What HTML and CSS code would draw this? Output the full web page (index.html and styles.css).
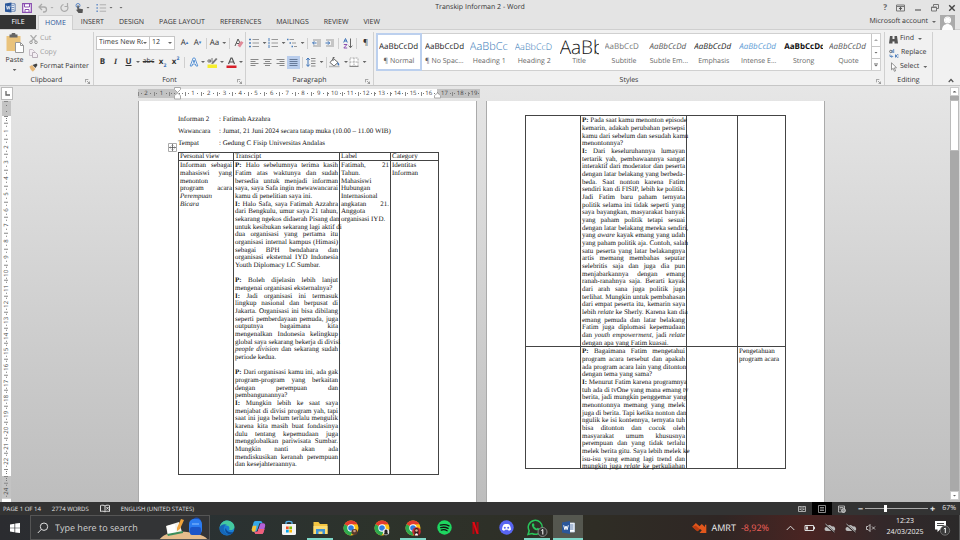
FILE: index.html
```html
<!DOCTYPE html>
<html lang="id">
<head>
<meta charset="utf-8">
<title>Transkip Informan 2 - Word</title>
<link rel="stylesheet" href="styles.css">
</head>
<body>
<svg width="0" height="0" class="defs" aria-hidden="true">
  <symbol id="chrome" viewBox="0 0 16 16">
    <circle cx="8" cy="8" r="7.5" fill="#fbc116"/>
    <path d="M8 8 1.5 4.2A7.500 7.500 0 0 1 14.500 4.200L8 4.500Z" fill="#e33b2e"/>
    <path d="M1.500 4.200A7.500 7.500 0 0 0 7.500 15.500L11 9.800 8 8Z" fill="#2da94f"/>
    <circle cx="8" cy="8" r="3.700" fill="#fff"/><circle cx="8" cy="8" r="2.800" fill="#2f7de1"/>
  </symbol>
  <symbol id="cloud-off" viewBox="0 0 12 12"><path d="M2.500 9a2 2 0 0 1 0-4A3 3 0 0 1 8 4.500 2.300 2.300 0 0 1 9.500 9Z" fill="#bbb"/><path d="M1.500 2.500l9 8" stroke="#2e2424" stroke-width="2"/><path d="M1.500 2l9 8" stroke="#ddd" stroke-width=".8"/></symbol>
  <symbol id="launch" viewBox="0 0 6 6"><path d="M.5 4V.5H4M2.500 2.500l3 3M5.500 3v2.500H3" stroke="#777" stroke-width=".8" fill="none"/></symbol>
</svg>

<div class="app">
  <header class="titlebar">
    <div class="quick">
      <svg width="11" height="11" viewBox="0 0 12 12"><path d="M6 2h5v8H6z" fill="#fff" stroke="#2b579a" stroke-width=".8"/><path d="M7 4h3M7 6h3M7 8h3" stroke="#2b579a" stroke-width=".7"/><path d="M0 1.500 7 .5v11L0 10.500Z" fill="#2b579a"/><path d="M1.500 4l1 4 1-3.500 1 3.500 1-4" stroke="#fff" stroke-width=".8" fill="none"/></svg>
      <button class="plain" aria-label="Save"><svg width="10" height="10" viewBox="0 0 10 10"><path d="M.7.700h8.600v8.600H.7z" fill="#fff" stroke="#8a4fb0" stroke-width="1.300"/><path d="M2.500 1v3h5V1M3 9V6.500h4V9" stroke="#8a4fb0" fill="none"/></svg></button>
      <button class="plain undo" aria-label="Undo"><svg width="10" height="10" viewBox="0 0 10 10"><path d="M4 1 1 4l3 3M1.500 4H6a2.500 2.500 0 0 1 0 5H5" stroke="#aaa" stroke-width="1.300" fill="none"/></svg><i class="caret pale"></i></button>
      <button class="plain" aria-label="Redo"><svg width="9" height="10" viewBox="0 0 9 10"><path d="M3.500 1.500A3.500 3.500 0 1 0 7 2.500M7.500 0v3.500H4.500" stroke="#aaa" stroke-width="1.200" fill="none"/></svg></button>
      <button class="plain" aria-label="Touch mode"><svg width="9" height="10" viewBox="0 0 9 10"><circle cx="3" cy="2.500" r="2" fill="none" stroke="#5b87c5"/><path d="M2.300 2.500h1.500v3L8 6.300 7.500 10H3.500L.8 6.500l1.500.5Z" fill="#555"/></svg><i class="caret"></i></button>
      <button class="plain" aria-label="Numbering"><svg width="11" height="10" viewBox="0 0 12 10"><path d="M4 1.500h7M4 5h7M4 8.500h7" stroke="#aaa"/><path d="M.5 1.500h1.500M.5 5h1.500M.5 8.500h1.500" stroke="#5b87c5" stroke-width="1.500"/></svg><i class="caret"></i></button>
      <i class="caret"></i>
    </div>
    <h1>Transkip Informan 2 - Word</h1>
    <div class="window-buttons">
      <button class="plain" aria-label="Help">?</button>
      <button class="plain" aria-label="Ribbon display"><svg width="9" height="8" viewBox="0 0 9 8"><path d="M.5 1h8v6h-8zM.5 2.500h8" stroke="#777" fill="none"/><path d="M4.500 3.300v3M3 5l1.500-1.700L6 5" stroke="#555" fill="none"/></svg></button>
      <button class="plain" aria-label="Minimize"><svg width="8" height="8" viewBox="0 0 8 8"><path d="M1 6h6" stroke="#666" stroke-width="1.300"/></svg></button>
      <button class="plain" aria-label="Restore"><svg width="8" height="8" viewBox="0 0 8 8"><path d="M2.500 2.500v-2h5v4H6M.5 3h5v4h-5zM.5 3.500h5" stroke="#777" fill="none"/></svg></button>
      <button class="plain" aria-label="Close"><svg width="8" height="8" viewBox="0 0 8 8"><path d="M1.200 1.200l5.500 5.500M6.700 1.200 1.200 6.700" stroke="#444" stroke-width="1.400"/></svg></button>
    </div>
  </header>

  <nav class="tabs">
    <button class="tab file">FILE</button>
    <button class="tab active">HOME</button>
    <button class="tab">INSERT</button>
    <button class="tab">DESIGN</button>
    <button class="tab">PAGE LAYOUT</button>
    <button class="tab">REFERENCES</button>
    <button class="tab">MAILINGS</button>
    <button class="tab">REVIEW</button>
    <button class="tab">VIEW</button>
    <button class="account">Microsoft account <i class="caret"></i>
      <svg width="15" height="15" viewBox="0 0 15 15"><path d="M0 0h15v15H0z" fill="#ababab"/><circle cx="7.500" cy="5" r="3" fill="none" stroke="#fff" stroke-width="1.200"/><circle cx="7.500" cy="5" r="2.500" fill="#fff"/><path d="M2 15c0-8 11-8 11 0Z" fill="#fff"/></svg>
    </button>
  </nav>

  <section class="ribbon">
    <div class="group clipboard">
      <div class="body">
        <button class="paste"><svg width="18" height="20" viewBox="0 0 18 20"><path d="M.5 3h14v15H.5z" fill="#eac37c"/><path d="M3.500 1.500h2a2 2 0 0 1 4 0h2V4.500h-8z" fill="#666"/><path d="M9.500 9.500h5l3 3v7h-8z" fill="#fff" stroke="#999"/><path d="M14.500 9.500v3h3" fill="none" stroke="#999"/></svg>Paste<i class="caret"></i></button>
        <div class="stack">
          <button class="row dim"><svg width="9" height="9" viewBox="0 0 9 9"><path d="M1.500 0l5 6M7.500 0l-5 6" stroke="#aaa" stroke-width="1.200"/><circle cx="2" cy="7.300" r="1.300" fill="none" stroke="#999"/><circle cx="7" cy="7.300" r="1.300" fill="none" stroke="#999"/></svg>Cut</button>
          <button class="row dim"><svg width="9" height="9" viewBox="0 0 9 9"><path d="M.5.500h3l2 2v4h-5z" fill="#f3eef3" stroke="#c9bfc9"/><path d="M3.500 3.500h3l2 2v3h-5z" fill="#f3eef3" stroke="#b9afb9"/></svg>Copy</button>
          <button class="row"><svg width="9" height="9" viewBox="0 0 9 9"><path d="M.5 3.500 3 2l3.500 4L4 8.500C3 8.500 1 6 .5 3.500Z" fill="#e8b878"/><path d="M3.500 2 7.500.500l1 1.500L6.500 5Z" fill="#444"/></svg>Format Painter</button>
        </div>
      </div>
      <footer>Clipboard<svg width="5" height="5"><use href="#launch"/></svg></footer>
    </div>

    <div class="group font">
      <div class="body rows">
        <div class="tools">
          <span class="pick face"><select aria-label="Font"><option>Times New Roman</option></select><i class="caret"></i></span><span class="pick size"><select aria-label="Font size"><option>12</option></select><i class="caret"></i></span>
          <button class="tool grow" aria-label="Grow font">A<sup>▴</sup></button>
          <button class="tool grow" aria-label="Shrink font">A<sup>▾</sup></button>
          <i class="sep"></i>
          <button class="tool case">Aa<i class="caret"></i></button>
          <i class="sep"></i>
          <button class="tool" aria-label="Clear formatting"><svg width="10" height="10" viewBox="0 0 10 10"><path d="M1 8 4 1l2 4M2.500 5.500h3" stroke="#555" fill="none"/><path d="M3.500 7.500 7 3l2.500 1.500L6 9.500Z" fill="#e08a98"/></svg></button>
        </div>
        <div class="tools">
          <button class="tool"><b>B</b></button>
          <button class="tool serif"><b><i>I</i></b></button>
          <button class="tool"><b><u>U</u></b></button><i class="caret"></i>
          <button class="tool wide"><s>abc</s></button>
          <button class="tool"><b>x<sub>2</sub></b></button>
          <button class="tool"><b>x<sup>2</sup></b></button>
          <i class="sep"></i>
          <button class="tool" aria-label="Text effects"><svg width="10" height="10" viewBox="0 0 10 10"><path d="M1.200 9 4.200 1h1.600l3 8H7L6.400 7H3.600L3 9ZM4.200 5.300h1.600L5 3Z" fill="#fff" stroke="#5b93d3"/></svg></button><i class="caret"></i>
          <button class="tool" aria-label="Highlight"><svg width="11" height="11" viewBox="0 0 11 11"><path d="M.5 7.500h9.500V11H.5z" fill="#f6ee2c"/><path d="M4 6.500 9 1l1.500 1L6 7Z" fill="#777"/><circle cx="2" cy="4" r="1.200" fill="none" stroke="#555" stroke-width=".8"/><path d="M3.300 2.500v3M5 1v4" stroke="#555" stroke-width=".8"/></svg></button><i class="caret"></i>
          <button class="tool" aria-label="Font color"><svg width="11" height="11" viewBox="0 0 11 11"><path d="M.5 8.500h10V11H.5z" fill="#d8202a"/><path d="M2.500 7 5 1h1l2.500 6M3.500 5h4" stroke="#555" stroke-width="1.200" fill="none"/></svg></button><i class="caret"></i>
        </div>
      </div>
      <footer>Font<svg width="5" height="5"><use href="#launch"/></svg></footer>
    </div>

    <div class="group paragraph">
      <div class="body rows">
        <div class="tools">
          <button class="tool list" aria-label="Bullets"><svg width="10" height="10" viewBox="0 0 10 10"><path d="M3.500 1.500H10M3.500 5H10M3.500 8.500H10" stroke="#999"/><path d="M0 1.500h2M0 5h2M0 8.500h2" stroke="#4a7ebb" stroke-width="1.700"/></svg><i class="caret"></i></button>
          <button class="tool list" aria-label="Numbering"><svg width="10" height="10" viewBox="0 0 10 10"><path d="M3.500 1.500H10M3.500 5H10M3.500 8.500H10" stroke="#999"/><path d="M1 0v3M1 3.700v2.600M1 7v3" stroke="#4a7ebb"/></svg><i class="caret"></i></button>
          <button class="tool list" aria-label="Multilevel list"><svg width="10" height="10" viewBox="0 0 10 10"><path d="M2.500 1.500H7M5 5h4M7 8.500h3" stroke="#999"/><path d="M0 1.500h1.500M2.500 5h1.500M4.500 8.500h1.500" stroke="#4a7ebb" stroke-width="1.700"/></svg><i class="caret"></i></button>
          <i class="sep"></i>
          <button class="tool" aria-label="Decrease indent"><svg width="10" height="10" viewBox="0 0 10 10"><path d="M1 2h8M5 4h4M5 6h4M1 8h8" stroke="#999"/><path d="M4.500 5H.7M2.300 3.300.600 5l1.700 1.700" stroke="#3f74b8" fill="none"/></svg></button>
          <button class="tool" aria-label="Increase indent"><svg width="10" height="10" viewBox="0 0 10 10"><path d="M1 2h8M6 4h3M6 6h3M1 8h8" stroke="#999"/><path d="M.5 5h4M3 3.300 4.700 5 3 6.700" stroke="#3f74b8" fill="none"/></svg></button>
          <i class="sep"></i>
          <button class="tool" aria-label="Sort"><svg width="10" height="11" viewBox="0 0 10 11"><path d="M.7 4.500 2.500.500l1.800 4M1.300 3h2.400" stroke="#3f74b8" fill="none"/><path d="M.8 6.500h3.200L.8 10h3.400" stroke="#8a4fb0" fill="none"/><path d="M7.500.500v9M5.700 7.700l1.800 2 1.800-2" stroke="#666" fill="none"/></svg></button>
          <i class="sep"></i>
          <button class="tool">¶</button>
        </div>
        <div class="tools">
          <button class="tool" aria-label="Align left"><svg width="9" height="9" viewBox="0 0 9 9"><path d="M.5 1.500h8M.5 3.500h5M.5 5.500h8M.5 7.500h5" stroke="#888"/></svg></button>
          <button class="tool" aria-label="Center"><svg width="9" height="9" viewBox="0 0 9 9"><path d="M.5 1.500h8M2 3.500h5M.5 5.500h8M2 7.500h5" stroke="#888"/></svg></button>
          <button class="tool" aria-label="Align right"><svg width="9" height="9" viewBox="0 0 9 9"><path d="M.5 1.500h8M3.500 3.500h5M.5 5.500h8M3.500 7.500h5" stroke="#888"/></svg></button>
          <button class="tool pressed" aria-label="Justify"><svg width="9" height="9" viewBox="0 0 9 9"><path d="M.5 1.500h8M.5 3.500h8M.5 5.500h8M.5 7.500h8" stroke="#667a99"/></svg></button>
          <i class="sep"></i>
          <button class="tool list" aria-label="Line spacing"><svg width="10" height="10" viewBox="0 0 10 10"><path d="M5 1.500h4.500M5 4h4.500M5 6.500h4.500M5 9h4.500" stroke="#888"/><path d="M2 1v8M.3 3 2 1l1.700 2M.3 7.500 2 9.500l1.700-2" stroke="#3f74b8" fill="none"/></svg><i class="caret"></i></button>
          <i class="sep"></i>
          <button class="tool list" aria-label="Shading"><svg width="11" height="11" viewBox="0 0 11 11"><path d="M4.500 1.500 9 5.500 5 9 1 5.500Z" fill="#fff" stroke="#666"/><path d="M4 4V.500h1.500" stroke="#666" fill="none"/><path d="M8.500 5c2 1 2 3 1.500 3.500S8 8 8.500 5Z" fill="#3f74b8"/><path d="M0 9.500h10.500" stroke="#bbb" stroke-width="1.500"/></svg><i class="caret"></i></button>
          <button class="tool list" aria-label="Borders"><svg width="10" height="10" viewBox="0 0 10 10"><path d="M1 1h8v8H1zM5 1v8M1 5h8" fill="#fff" stroke="#aaa" stroke-dasharray="1 .5"/><path d="M.5 9.500h9" stroke="#888"/></svg><i class="caret"></i></button>
        </div>
      </div>
      <footer>Paragraph<svg width="5" height="5"><use href="#launch"/></svg></footer>
    </div>

    <div class="group styles">
      <div class="body">
        <div class="gallery">
          <button class="style on"><span>AaBbCcDd</span>¶ Normal</button>
          <button class="style"><span>AaBbCcDd</span>¶ No Spac...</button>
          <button class="style h1"><span>AaBbCc</span>Heading 1</button>
          <button class="style h2"><span>AaBbCcD</span>Heading 2</button>
          <button class="style ttl"><span>AaBb</span>Title</button>
          <button class="style sub"><span>AaBbCcD</span>Subtitle</button>
          <button class="style it soft"><span>AaBbCcDd</span>Subtle Em...</button>
          <button class="style it"><span>AaBbCcDd</span>Emphasis</button>
          <button class="style it blue"><span>AaBbCcDd</span>Intense E...</button>
          <button class="style strong"><span>AaBbCcDd</span>Strong</button>
          <button class="style it soft"><span>AaBbCcDd</span>Quote</button>
          <div class="scroller"><button aria-label="Up"><i class="caret up pale"></i></button><button aria-label="Down"><i class="caret"></i></button><button aria-label="More"><i class="caret more"></i></button></div>
        </div>
      </div>
      <footer>Styles<svg width="5" height="5"><use href="#launch"/></svg></footer>
    </div>

    <div class="group editing">
      <div class="body">
        <div class="stack">
          <button class="row"><svg width="9" height="9" viewBox="0 0 9 9"><path d="M1 1h2.500v3h2V1H8l1 7.500H5.500v-2h-2v2H0Z" fill="#555"/></svg>Find <i class="caret"></i></button>
          <button class="row"><svg width="10" height="9" viewBox="0 0 10 9"><circle cx="1.800" cy="2.500" r="1.200" fill="none" stroke="#555" stroke-width=".8"/><path d="M3.200 1v3M4.700 0v4M1 5.500v2h2.500M2.500 6.300l1.200 1.200-1.200 1.200" fill="none" stroke="#3f74b8" stroke-width=".8"/><path d="M9.500 6a1.300 1.300 0 1 0 0 2M6.500 5.500v3" fill="none" stroke="#3f74b8" stroke-width=".9"/></svg>Replace</button>
          <button class="row"><svg width="9" height="10" viewBox="0 0 9 10"><path d="M2.500.8v7l1.700-1.500 1.200 3 1.200-.5-1.200-2.900 2.100-.2Z" fill="#fff" stroke="#777" stroke-width=".8"/></svg>Select <i class="caret"></i></button>
        </div>
      </div>
      <footer>Editing</footer>
    </div>
    <button class="collapse" aria-label="Collapse the ribbon"><svg width="6" height="5" viewBox="0 0 6 5"><path d="M.7 4 3 1.500 5.300 4" stroke="#555" stroke-width="1.200" fill="none"/></svg></button>
  </section>

  <main class="workspace">
    <button class="tabstop" aria-label="Tab selector"><svg width="5" height="5" viewBox="0 0 5 5"><path d="M1 0v4h4" stroke="#666" stroke-width="1.300" fill="none"/></svg></button>
    <div class="ruler-row">
      <div class="ruler">
        <span class="out">2</span><span class="out">1</span><span class="out half"></span><span class="half mark"><svg class="indent" width="7" height="13" viewBox="0 0 7 13"><path d="M.5.500h6v2l-3 3-3-3zM3.500 6l3 2.500v3.500h-6V8.500z" fill="#fff" stroke="#aaa"/></svg></span><span>1</span><span>2</span><span>3</span><span>4</span><span>5</span><span>6</span><span>7</span><span>8</span><span>9</span><span>10</span><span>11</span><span>12</span><span>13</span><span>14</span><span>15</span><span>16</span><span class="out mark"><svg class="indent" width="7" height="13" viewBox="0 0 7 13"><path d="M3.500 6l3 2.500v2.500h-6V8.500z" fill="#fff" stroke="#aaa"/></svg>17</span><span class="out">18</span><span class="out last">19</span>
      </div>
      <div class="ruler-rest"></div>
    </div>
    <div class="vruler">
      <span class="out margin"></span><span class="half"></span><span>1</span><span>2</span><span>3</span><span>4</span><span>5</span><span>6</span><span>7</span><span>8</span><span>9</span><span>10</span><span>11</span><span>12</span><span>13</span><span>14</span><span>15</span><span>16</span><span>17</span><span>18</span><span>19</span><span>20</span><span>21</span><span>22</span><span class="half"></span><span class="out half"></span><span class="out">24</span>
    </div>

    <div class="pages">
      <article class="page">
        <p class="meta"><span>Informan 2</span>: Fatimah Azzahra</p>
        <p class="meta"><span>Wawancara</span>: Jumat, 21 Juni 2024 secara tatap muka (10.00 – 11.00 WIB)</p>
        <p class="meta"><span>Tempat</span>: Gedung C Fisip Universitas Andalas</p>
        <div class="sheet">
        <svg class="anchor" width="9" height="9" viewBox="0 0 9 9"><path d="M.5.500h8v8h-8z" fill="#fff" stroke="#aaa"/><path d="M4.500 1.500v6M1.500 4.500h6M3.700 2.300l.8-.8.800.8M3.700 6.700l.8.800.8-.8M2.300 3.700l-.8.800.8.800M6.700 3.700l.8.800-.8.800" stroke="#555" stroke-width=".8" fill="none"/></svg>
        <table>
          <colgroup><col class="c1"><col class="c2"><col class="c3"><col class="c4"></colgroup>
          <thead><tr><th>Personal view</th><th>Transcipt</th><th>Label</th><th>Category</th></tr></thead>
          <tbody><tr class="tall">
            <td><div class="text"><span>Informan sebagai</span><span>mahasiswi yang</span><span class="end">menonton</span><span>program acara</span><span class="end"><em>Perempuan</em></span><span class="end"><em>Bicara</em></span></div></td>
            <td><div class="text"><span><b>P:</b> Halo sebelumnya terima kasih</span><span>Fatim atas waktunya dan sudah</span><span>bersedia untuk menjadi informan</span><span>saya, saya Safa ingin mewawancarai</span><span class="end">kamu di penelitian saya ini.</span><span><b>I:</b> Halo Safa, saya Fatimah Azzahra</span><span>dari Bengkulu, umur saya 21 tahun,</span><span>sekarang ngekos didaerah Pisang dan</span><span>untuk kesibukan sekarang lagi aktif di</span><span>dua organisasi yang pertama itu</span><span>organisasi internal kampus (Himasi)</span><span>sebagai BPH bendahara dan</span><span>organisasi eksternal IYD Indonesia</span><span class="end">Youth Diplomacy LC Sumbar.</span><span></span><span><b>P:</b> Boleh dijelasin lebih lanjut</span><span class="end">mengenai organisasi eksternalnya?</span><span><b>I:</b> Jadi organisasi ini termasuk</span><span>lingkup nasional dan berpusat di</span><span>Jakarta. Organisasi ini bisa dibilang</span><span>seperti pemberdayaan pemuda, juga</span><span>outputnya bagaimana kita</span><span>mengenalkan Indonesia kelingkup</span><span>global saya sekarang bekerja di divisi</span><span><em>people division</em> dan sekarang sudah</span><span class="end">periode kedua.</span><span></span><span><b>P:</b> Dari organisasi kamu ini, ada gak</span><span>program-program yang berkaitan</span><span>dengan perempuan dan</span><span class="end">pembangunannya?</span><span><b>I:</b> Mungkin lebih ke saat saya</span><span>menjabat di divisi program yah, tapi</span><span>saat ini juga belum terlalu mengulik</span><span>karena kita masih buat fondasinya</span><span>dulu tentang kepemudaan juga</span><span>mengglobalkan pariwisata Sumbar.</span><span>Mungkin nanti akan ada</span><span>mendiskusikan keranah perempuan</span><span class="end">dan kesejahteraannya.</span></div></td>
            <td><div class="text"><span>Fatimah, 21</span><span class="end">Tahun.</span><span class="end">Mahasiswi</span><span class="end">Hubungan</span><span class="end">Internasional</span><span>angkatan 21.</span><span class="end">Anggota</span><span class="end">organisasi IYD.</span></div></td>
            <td><div class="text"><span class="end">Identitas</span><span class="end">Informan</span></div></td>
          </tr></tbody>
        </table>
        </div>
      </article>

      <article class="page second">
        <table>
          <colgroup><col class="c1"><col class="c2"><col class="c3"><col class="c4"></colgroup>
          <tbody>
          <tr>
            <td></td>
            <td><div class="text"><span><b>P:</b> Pada saat kamu menonton episode</span><span>kemarin, adakah perubahan persepsi</span><span>kamu dari sebelum dan sesudah kamu</span><span class="end">menontonnya?</span><span><b>I:</b> Dari keseluruhannya lumayan</span><span>tertarik yah, pembawaannya sangat</span><span>interaktif dari moderator dan peserta</span><span>dengan latar belakang yang berbeda-</span><span>beda. Saat nonton karena Fatim</span><span>sendiri kan di FISIP, lebih ke politik.</span><span>Jadi Fatim baru paham ternyata</span><span>politik selama ini tidak seperti yang</span><span>saya bayangkan, masyarakat banyak</span><span>yang paham politik tetapi sesuai</span><span>dengan latar belakang mereka sendiri,</span><span>yang <em>aware</em> kayak emang yang udah</span><span>yang paham politik aja. Contoh, salah</span><span>satu peserta yang latar belakangnya</span><span>artis memang membahas seputar</span><span>selebritis saja dan juga dia pun</span><span>menjabarkannya dengan emang</span><span>ranah-ranahnya saja. Berarti kayak</span><span>dari arah sana juga politik juga</span><span>terlihat. Mungkin untuk pembahasan</span><span>dari empat peserta itu, kemarin saya</span><span>lebih <em>relate</em> ke Sherly. Karena kan dia</span><span>emang pemuda dan latar belakang</span><span>Fatim juga diplomasi kepemudaan</span><span>dan <em>youth empowerment</em>, jadi <em>relate</em></span><span class="end">dengan apa yang Fatim kuasai.</span></div></td>
            <td></td><td></td>
          </tr>
          <tr>
            <td></td>
            <td><div class="text continued"><span><b>P:</b> Bagaimana Fatim mengetahui</span><span>program acara tersebut dan apakah</span><span>ada program acara lain yang ditonton</span><span class="end">dengan tema yang sama?</span><span><b>I:</b> Menurut Fatim karena programnya</span><span>tuh ada di tvOne yang mana emang tv</span><span>berita, jadi mungkin penggemar yang</span><span>menontonnya memang yang melek</span><span>juga di berita. Tapi ketika nonton dan</span><span>ngulik ke isi kontennya, ternyata tuh</span><span>bisa ditonton dan cocok oleh</span><span>masyarakat umum khususnya</span><span>perempuan dan yang tidak terlalu</span><span>melek berita gitu. Saya lebih melek ke</span><span>isu-isu yang emang lagi trend dan</span><span>mungkin juga <em>relate</em> ke perkuliahan</span></div></td>
            <td></td>
            <td><div class="text"><span class="end">Pengetahuan</span><span class="end">program acara</span></div></td>
          </tr>
          </tbody>
        </table>
      </article>
    </div>

    <div class="scrollbar">
      <button aria-label="Scroll up"><i class="caret up"></i></button>
      <div class="track"><div class="thumb"></div></div>
      <button aria-label="Scroll down"><i class="caret"></i></button>
    </div>
  </main>

  <footer class="status">
    <span>PAGE 1 OF 14</span><span>2774 WORDS</span>
    <svg width="10" height="9" viewBox="0 0 10 9"><path d="M5 2v6M5 2C4 1 2 1 .5 1.500v6C2 7 4 7 5 8c1-1 2.500-1 4.500-.5v-6C8 1 6 1 5 2" stroke="#ddd" fill="none"/><path d="M6.500 3l2 2.500M8.500 3l-2 2.500" stroke="#ddd"/></svg>
    <span>ENGLISH (UNITED STATES)</span>
    <div class="views">
      <button aria-label="Read mode"><svg width="8" height="8" viewBox="0 0 8 8"><path d="M4 2v5M.5 1.500h3L4 2l.5-.5h3v5h-3L4 7l-.5-.5h-3zM1.500 3h1.500M1.500 4.500h1.500M5 3h1.500M5 4.500h1.500" stroke="#ccc" stroke-width=".8" fill="none"/></svg></button>
      <button class="on" aria-label="Print layout"><svg width="8" height="8" viewBox="0 0 8 8"><path d="M.5.500h7v7h-7zM2 2.500h4M2 4h4M2 5.500h4" stroke="#aaa" fill="none" stroke-width=".8"/></svg></button>
      <button aria-label="Web layout"><svg width="8" height="8" viewBox="0 0 8 8"><path d="M.5 1h6v6h-6zM1.500 2.500h4M1.500 4h2" stroke="#ccc" fill="none" stroke-width=".8"/><circle cx="5.500" cy="5.500" r="2" fill="#999" stroke="#eee" stroke-width=".6"/></svg></button>
    </div>
    <div class="zoom"><b>−</b><input type="range" min="10" max="220" value="77" aria-label="Zoom"><b>+</b></div>
    <span class="percent">67%</span>
  </footer>

  <footer class="taskbar">
    <button class="start" aria-label="Start"><svg width="10" height="10" viewBox="0 0 10 10"><path d="M0 1.400 4.500.700v4H0zM5.200.600 10 0v4.700H5.200zM0 5.300h4.500v4L0 8.600zM5.200 5.300H10V10l-4.800-.6z" fill="#fff"/></svg></button>
    <label class="search">
      <svg width="12" height="12" viewBox="0 0 12 12"><circle cx="7" cy="4.700" r="3.700" fill="none" stroke="#ddd"/><path d="M4.300 7.400.800 11" stroke="#ddd"/></svg>
      <input type="text" placeholder="Type here to search" aria-label="Type here to search">
      <svg width="50" height="24" viewBox="0 0 50 24"><path d="M0 24C5 16 20 15 28 16s18 3 21 8z" fill="#e6bd8d"/><path d="M7 10l13-4 3 10-14 4z" fill="#f4f1ea"/><path d="M8 10l8-2 1 9-8 2z" fill="#fff"/><path d="M8 18l16-3v2L9 20z" fill="#3c8d5a"/><path d="M18 12l4-9 3 1-4 9-3 2z" fill="#f0a33a"/><path d="M33 6c0-6 9-6 9 0z" fill="#1d4fb5"/><rect x="30" y="3" width="13" height="16" rx="5" fill="#2b7bf0"/><rect x="31" y="11" width="11" height="8" rx="2" fill="#1b55c9"/><path d="M33 8h7" stroke="#8fc0ff"/></svg>
    </label>
    <nav class="apps">
      <button aria-label="Edge"><svg width="16" height="16" viewBox="0 0 16 16"><circle cx="8" cy="8" r="7.500" fill="#1b7fd4"/><path d="M.6 8C1 3 5 .500 8 .500c5 0 8 4 7.400 7-.5 2.500-4 3.200-5.400 2 1-1 .5-4-2.500-4S1 7 .6 8Z" fill="#44c9a0"/><path d="M.6 8C1 4.500 6 3.500 8 5c-3 0-4.500 4-2 7 1 1.500 3 2.500 5 2.300C6 17 0 13 .6 8Z" fill="#1667b8"/><path d="M7 8c0 3 3 5 7.500 4-1 1.500-2 2-3.500 2.500C7 14 5 10 7 8Z" fill="#0c4a94"/></svg></button>
      <button aria-label="Copilot"><svg width="15" height="15" viewBox="0 0 16 16"><path d="M5 1h5c1.500 0 2 1 2.300 2.500H9L6.500 11c-.5 1-1 1.500-2 1.500H3C1 12.500.500 11 1 9l1.500-5.500C3 1.800 3.500 1 5 1Z" fill="#35a7e8"/><path d="M1 9l1-3 4 0-1.500 6.500H3C1 12.500.500 11 1 9Z" fill="#f2c23a"/><path d="M11 15H6c-1.500 0-2-1-2.300-2.500H7L9.500 5c.5-1 1-1.500 2-1.500H13c2 0 2.500 1.500 2 3.500l-1.500 5.500C13 14.200 12.500 15 11 15Z" fill="#b560d8"/><path d="M11 15H6c-1.500 0-2-1-2.300-2.500H7l1-3 6.500 0-1 3C13 14.200 12.500 15 11 15Z" fill="#f0607a"/></svg></button>
      <button aria-label="Store"><svg width="16" height="16" viewBox="0 0 16 16"><path d="M5 4V2.500C5 1 11 1 11 2.500V4" fill="none" stroke="#5ab4ee" stroke-width="1.300"/><path d="M1 4h14v9.500a1.500 1.500 0 0 1-1.500 1.500h-11A1.500 1.500 0 0 1 1 13.500z" fill="#f2f2f2"/><path d="M5 6.500h2.700v2.700H5z" fill="#f25022"/><path d="M8.300 6.500H11v2.700H8.300z" fill="#7fba00"/><path d="M5 9.800h2.700v2.700H5z" fill="#00a4ef"/><path d="M8.300 9.800H11v2.700H8.300z" fill="#ffb900"/></svg></button>
      <button class="open" aria-label="File Explorer"><svg width="15" height="14" viewBox="0 0 15 14"><path d="M.5 1h5l1.500 2h7.500v10H.5z" fill="#f4c542"/><path d="M.5 5h14v8H.5z" fill="#fbdc74"/><path d="M3 8h9v5H9.500v-2.500h-4V13H3z" fill="#3f94d8"/></svg></button>
      <button aria-label="Chrome"><svg width="16" height="16" viewBox="0 0 16 16"><use href="#chrome"/><circle cx="11.500" cy="12" r="3" fill="#5a3a2c"/><circle cx="11.500" cy="11" r="1.300" fill="#c79a7d"/></svg></button>
      <button aria-label="Chrome, profile 2"><svg width="16" height="16" viewBox="0 0 16 16"><use href="#chrome"/><circle cx="12" cy="12" r="3.200" fill="#e8e8e8"/><path d="M10.500 11a1.500 1.500 0 0 1 3 0v2l1 1.500h-5l1-1.500z" fill="#222"/></svg></button>
      <button class="open" aria-label="Chrome, profile 3"><svg width="16" height="16" viewBox="0 0 16 16"><use href="#chrome"/><circle cx="11.500" cy="11.500" r="4.300" fill="#c62c33"/><path d="M9.500 10a2 2 0 0 1 4 0v5.500h-4z" fill="#2c1c1c"/><circle cx="11.500" cy="10.500" r="1.300" fill="#e0b090"/><path d="M10 15.500c0-3 3-3 3 0z" fill="#fff"/></svg></button>
      <button aria-label="Spotify"><svg width="15" height="15" viewBox="0 0 16 16"><circle cx="8" cy="8" r="7.700" fill="#1ed760"/><path d="M3.500 5.500c3-1 6.500-.7 9.300.8M4 8.200c2.600-.8 5.500-.5 7.800.8M4.500 10.700c2-.6 4.500-.4 6.300.7" stroke="#111" stroke-width="1.400" fill="none" stroke-linecap="round"/></svg></button>
      <button aria-label="Netflix"><svg width="7" height="12" viewBox="0 0 8 12" preserveAspectRatio="none"><path d="M.5 0h2.300v12L.5 12zM5.200 0h2.300v12l-2.300-.3z" fill="#b1060f"/><path d="M.5 0h2.300l4.700 12-2.300-.3z" fill="#e50914"/></svg></button>
      <button aria-label="Discord"><svg width="15" height="15" viewBox="0 0 16 16"><circle cx="8" cy="8" r="7.700" fill="#5865f2"/><path d="M5 4.700c2-.7 4-.7 6 0 1.200 1.800 1.800 3.700 1.700 5.800-1 .7-1.700.9-2.400 1l-.6-1H6.300l-.6 1c-.8-.1-1.500-.4-2.400-1C3.200 8.400 3.800 6.500 5 4.700Z" fill="#fff"/><circle cx="6.200" cy="8.200" r="1.100" fill="#5865f2"/><circle cx="9.800" cy="8.200" r="1.100" fill="#5865f2"/></svg></button>
      <button class="open" aria-label="WhatsApp"><svg width="22" height="18" viewBox="0 0 22 18"><path d="M2 15.500l1.200-3.700A7 7 0 1 1 6 14.500z" fill="none" stroke="#29c45b" stroke-width="1.500"/><path d="M6.500 4.500c1-.8 1.500 0 2 1.500 0 .6-.7.800-.5 1.300.6 1 1.500 1.800 2.500 2.200.6 0 .8-.8 1.300-.8 1.500.7 1.700.8 1.200 1.700-1.500 2-4.500.3-6-1.500C5.700 7 5.500 5.500 6.500 4.500Z" fill="#29c45b"/><circle cx="16.500" cy="13" r="4.500" fill="#333" stroke="#999" stroke-width=".8"/><path d="M15.300 11.500l1.500-1v5" stroke="#fff" fill="none"/></svg></button>
      <button class="open current" aria-label="Word"><svg width="13" height="13" viewBox="0 0 13 13"><path d="M6 2h6.500v9H6z" fill="#fff" stroke="#c8d6ea" stroke-width=".8"/><path d="M8 4h3.500M8 6h3.500M8 8h3.500" stroke="#2b579a" stroke-width=".8"/><path d="M0 1.500 8 0v13l-8-1.500Z" fill="#2b579a"/><path d="M1.700 4.300l1.200 4.400L4 5l1.100 3.700 1.200-4.400" stroke="#fff" fill="none"/></svg></button>
    </nav>
    <button class="stock"><svg width="15" height="10" viewBox="0 0 16 11"><path d="M0 4 4 0l4 3.500L10.500 1 14 4.500V2h1.500v9H8l2.500-3-2-1.500L6 9Z" fill="#e2571c"/><path d="M0 4l4 4 2 1 2-2.500L4 3Z" fill="#b93d12"/></svg><span>AMRT</span><span class="down">-8,92%</span></button>
    <div class="tray">
      <svg width="9" height="6" viewBox="0 0 9 6"><path d="M.7 5 4.500 1.200 8.300 5" stroke="#ddd" fill="none"/></svg>
      <svg width="11" height="8" viewBox="0 0 11 8"><path d="M1 1.500h8.500v5H1zM9.500 3h1v2h-1z" stroke="#ddd" fill="none"/><path d="M2 2.500h2v3H2z" fill="#ddd"/></svg>
      <svg width="12" height="12"><use href="#cloud-off"/></svg>
      <svg width="12" height="12"><use href="#cloud-off"/></svg>
      <svg width="10" height="8" viewBox="0 0 10 8"><path d="M.5 2.500h1.500l2-2v7l-2-2H.500zM6 2.500l3 3M9 2.500l-3 3" stroke="#ddd" stroke-width=".8" fill="none"/></svg>
    </div>
    <div class="clock"><time>12:23</time><time>24/03/2025</time></div>
    <button class="notes" aria-label="Notifications"><svg width="17" height="17" viewBox="0 0 17 17"><path d="M1 2h11v8.500H6L3.500 13v-2.500H1z" fill="#fff"/><path d="M3 4.500h7M3 6.500h7" stroke="#333" stroke-width=".9"/><circle cx="11" cy="11.500" r="4.700" fill="#3a3a3a" stroke="#888" stroke-width=".7"/><path d="M9.800 10l1.500-1v5" stroke="#fff" fill="none"/></svg></button>
  </footer>
</div>
</body>
</html>
```
FILE: styles.css
```css
* { box-sizing: border-box; }
body { margin: 0; font: 7px/10px "Open Sans", "Noto Sans", sans-serif; color: #333; background: #e4e4e4; text-rendering: geometricPrecision; }
button, select, input { font: inherit; color: inherit; border: 0; background: none; padding: 0; margin: 0; text-rendering: inherit; }
svg { flex: none; display: block; }
.defs { position: absolute; }

.app { display: grid; grid-template-rows: 15px 15px 56px minmax(0, 1fr) 13px 25px; height: 100vh; overflow: hidden; }

.caret { display: block; flex: none; width: 4px; height: 2px; background: #666; clip-path: polygon(0 0, 100% 0, 50% 100%); }
.caret.pale { background: #aaa; }
.caret.up { clip-path: polygon(50% 0, 100% 100%, 0 100%); }
.caret.more { height: 4px; clip-path: polygon(0 0, 100% 0, 100% 25%, 0 25%, 0 50%, 100% 50%, 50% 100%, 0 50%); }

/* title bar */
.titlebar { display: grid; grid-template-columns: 1fr auto 1fr; align-items: center; }
.titlebar h1 { margin: 0; font-size: 7px; font-weight: 400; }
.quick { display: flex; align-items: center; gap: 6px; padding-left: 5px; }
.plain { display: flex; align-items: center; gap: 2px; }
.window-buttons { display: flex; justify-content: flex-end; align-items: center; gap: 9px; padding-right: 4px; font-size: 8px; font-weight: 700; color: #666; }

/* tabs */
.tabs { display: flex; align-items: stretch; gap: 1px; border-bottom: 1px solid #cfcfcf; }
.tab { padding: 1px 7px 0; font-size: 7px; }
.tab.file { width: 36px; margin-right: 1px; background: #333; color: #fff; }
.tab.active { padding: 1px 6px 0; margin-bottom: -1px; border: 1px solid #cfcfcf; border-bottom: 0; background: #f1f1f1; color: #2b579a; }
.account { display: flex; align-items: center; gap: 4px; margin: 0 5px 0 auto; }

/* ribbon */
.ribbon { display: flex; background: #f1f1f1; border-bottom: 1px solid #c6c6c6; }
.group { display: flex; flex-direction: column; margin-top: 2px; border-right: 1px solid #d0d0d0; }
.group .body { display: flex; flex: 1; }
.group footer { position: relative; text-align: center; line-height: 8px; font-size: 7px; }
.group footer svg { position: absolute; right: 3px; bottom: 1px; }
.clipboard { width: 94px; }
.font { width: 152px; }
.paragraph { width: 128px; }
.styles { flex: 1; min-width: 0; }
.editing { width: 48px; }
.collapse { display: flex; align-items: flex-end; justify-content: flex-end; flex: none; width: 27px; padding: 0 6px 2px 0; }
.paste { display: flex; flex-direction: column; align-items: center; gap: 3px; width: 29px; padding-top: 1px; }
.stack { display: flex; flex-direction: column; gap: 4px; padding-top: 2px; }
.row { display: flex; align-items: center; gap: 2px; height: 10px; white-space: nowrap; }
.row .caret { margin-left: 2px; }
.row.dim { color: #a0a0a0; }
.editing .body { padding-left: 4px; }

.rows { flex-direction: column; gap: 5px; padding: 4px 0 0 2px; }
.tools { display: flex; align-items: center; height: 14px; }
.tool { display: flex; align-items: center; justify-content: center; width: 13px; height: 13px; font-size: 8px; flex: none; }
.tool.list { width: 19px; gap: 4px; }
.tool.wide { width: 15px; font-size: 7px; }
.tool.case { width: 18px; gap: 3px; }
.tool.serif { font-family: "Liberation Serif", serif; }
.tool sup, .tool sub { font-size: 5px; line-height: 0; color: #3f74b8; }
.tool.pressed { background: #b9cdec; }
.sep { flex: none; width: 1px; height: 11px; margin: 0 2px; background: #cfcfcf; }
.font .tools > .caret { margin: 0 1px; }
.pick { display: flex; align-items: center; height: 14px; padding: 0 2px; border: 1px solid #c6c6c6; background: #fff; }
.pick select { appearance: none; flex: 1; min-width: 0; font-size: 7px; overflow: hidden; outline: 0; }
.pick.face { width: 54px; }
.pick.size { width: 26px; margin-right: 3px; border-left: 0; }

.gallery { display: grid; grid-template-columns: repeat(11, minmax(0, 1fr)) 9px; flex: 1; margin: 1px 3px 6px 2px; border: 1px solid #d0d0d0; background: #fff; }
.style { display: flex; flex-direction: column; justify-content: flex-end; padding: 0 3px 3px; overflow: hidden; white-space: nowrap; text-align: center; color: #666; }
.style span { display: block; height: 18px; margin-bottom: 1px; overflow: hidden; font-size: 8px; line-height: 18px; text-align: left; color: #222; }
.style.on { border: 2px solid #bcd0ee; padding: 0 1px 2px; margin: -1px 0 -1px -1px; }
.style.h1 span { font-size: 11px; font-weight: 300; color: #2e74b5; }
.style.h2 span { font-size: 9px; font-weight: 300; color: #2e74b5; }
.style.ttl span { font-size: 19px; font-weight: 300; color: #111; }
.style.sub span { color: #777; }
.style.it span { font-style: italic; }
.style.soft span { color: #555; }
.style.blue span { color: #5b9bd5; }
.style.strong span { font-weight: 700; color: #111; }
.scroller { display: grid; grid-template-rows: repeat(3, 1fr); border-left: 1px solid #c6c6c6; }
.scroller button { display: grid; place-items: center; }
.scroller button + button { border-top: 1px solid #c6c6c6; }

/* workspace */
.workspace { display: grid; grid-template: 15px minmax(0, 1fr) / 13px minmax(0, 1fr) 10px; background: linear-gradient(#e6e6e6, #bdbdbd); }
.tabstop { display: grid; place-items: center; margin: 1px 0 1px 1px; border: 1px solid #bbb; background: #fff; }
.ruler-row { display: flex; justify-content: center; padding-top: 3px; height: 12px; }
.ruler { display: flex; width: 342px; flex: none; }
.ruler-rest { width: 345px; flex: none; }
.ruler span { display: flex; justify-content: space-evenly; align-items: center; flex: 4 4 0; min-width: 0; height: 9px; font-size: 6px; line-height: 9px; color: #444; background: linear-gradient(#888, #888) 0 50% / 1px 4px no-repeat #fff; }
.ruler span::before, .ruler span::after { content: ""; width: 1px; height: 1px; background: #777; }
.ruler .half { flex: 2 2 0; }
.ruler .last { flex: 3 3 0; }
.ruler .out { background-color: #c3c3c3; }
.ruler .mark { position: relative; }
.indent { position: absolute; left: -3px; top: -2px; }

.vruler { display: flex; flex-direction: column; grid-row: 2; width: 9px; margin-left: 2px; overflow: hidden; background: #fff; }
.vruler span { display: flex; align-items: center; justify-content: space-evenly; flex: 0 0 calc(362px / 23); width: 9px; writing-mode: vertical-rl; transform: rotate(180deg); font-size: 6px; line-height: 9px; color: #444; background: linear-gradient(#888, #888) 50% 100% / 4px 1px no-repeat; }
.vruler span::before, .vruler span::after { content: ""; width: 1px; height: 1px; background: #777; }
.vruler .out { background-color: #c3c3c3; }
.vruler .margin { flex-basis: 15px; }
.vruler .half { flex-basis: 7px; }

.pages { display: flex; justify-content: center; gap: 9px; grid-column: 2; overflow: hidden; }
.page { flex: none; width: 339px; padding: 12px 38px 0 39px; background: #fff; border-left: 1px solid #aaa; border-right: 1px solid #aaa; color: #111; font: 7px/8px "Liberation Serif", serif; }
.page.second { padding: 14px 38px 0; }
.meta { display: flex; margin: 0; line-height: 12px; white-space: pre; }
.meta span { width: 41px; }
.sheet { position: relative; margin-top: 3px; }
.anchor { position: absolute; left: -10px; top: -9px; }
table { width: 261px; table-layout: fixed; border-collapse: collapse; }
.c1 { width: 55px; }
.c2 { width: 106px; }
.c3 { width: 51px; }
.c4 { width: 48px; }
th, td { padding: 0 1px; border: 1px solid #444; text-align: left; vertical-align: top; font-weight: 400; }
th { line-height: 7px; white-space: nowrap; }
.tall { height: 314px; }
/* every third line is one pixel shorter, giving the 23px-per-three-lines pitch */
.text { display: flex; flex-direction: column; }
.text.continued { margin-bottom: -2px; }
.text span { display: block; height: 8px; white-space: nowrap; text-align: justify; text-align-last: justify; }
.text span:nth-child(3n) { height: 7px; }
.text .end { text-align-last: left; }

.scrollbar { display: flex; flex-direction: column; grid-column: 3; grid-row: 1 / 3; padding: 1px 1px 2px 0; }
.scrollbar button { display: grid; place-items: center; height: 9px; background: #fff; border: 1px solid #ccc; }
.track { flex: 1; padding-top: 4px; background: #a9a9a9; }
.thumb { height: 13%; background: #fff; border: 1px solid #bbb; }

/* status bar */
.status { display: flex; align-items: center; gap: 11px; padding: 0 4px 0 3px; background: #333; color: #e6e6e6; font-size: 6px; }
.views { display: flex; align-self: stretch; margin: 0 -5px 0 auto; }
.views button { display: grid; place-items: center; width: 20px; }
.views .on { background: #000; }
.zoom { display: flex; align-items: center; gap: 2px; margin-right: -4px; font-size: 9px; }
.zoom input { appearance: none; width: 63px; height: 9px; background: linear-gradient(#aaa, #aaa) 0 50% / 100% 1px no-repeat; }
.zoom input::-webkit-slider-thumb { appearance: none; width: 3px; height: 7px; background: #fff; }
.percent { font-size: 7px; }

/* taskbar */
.taskbar { display: flex; align-items: stretch; background: linear-gradient(90deg, #2b2c30, #2a3133 20%, #2d332b 40%, #2f2d25 62%, #2f2624 75%, #4a2422 84%, #33282a 92%, #2b2929); color: #eee; border-right: 1px solid #555; }
.start { display: grid; place-items: center; width: 30px; }
.search { display: flex; align-items: center; gap: 6px; width: 180px; padding-left: 6px; border: 1px solid #555; background: #333436; overflow: hidden; }
.search input { flex: 1; min-width: 0; font-size: 9px; outline: 0; }
.search input::placeholder { color: #d0d0d0; opacity: 1; }
.apps { display: flex; padding-left: 2px; gap: 1px; }
.apps button { display: grid; place-items: center; width: 30px; }
.apps .open { background: linear-gradient(#7fd8c8, #7fd8c8) 50% 100% / 26px 2px no-repeat; }
.apps .current { background-color: #55574f; background-size: 30px 2px; }
.stock { display: flex; align-items: center; gap: 5px; margin-left: auto; font-size: 9px; }
.stock .down { color: #f0605a; }
.tray { display: flex; align-items: center; gap: 9px; margin: 0 9px 0 17px; }
.clock { display: flex; flex-direction: column; justify-content: center; align-items: center; width: 40px; padding-bottom: 2px; font-size: 7px; line-height: 11px; }
.notes { display: grid; place-items: center; width: 34px; }
```
